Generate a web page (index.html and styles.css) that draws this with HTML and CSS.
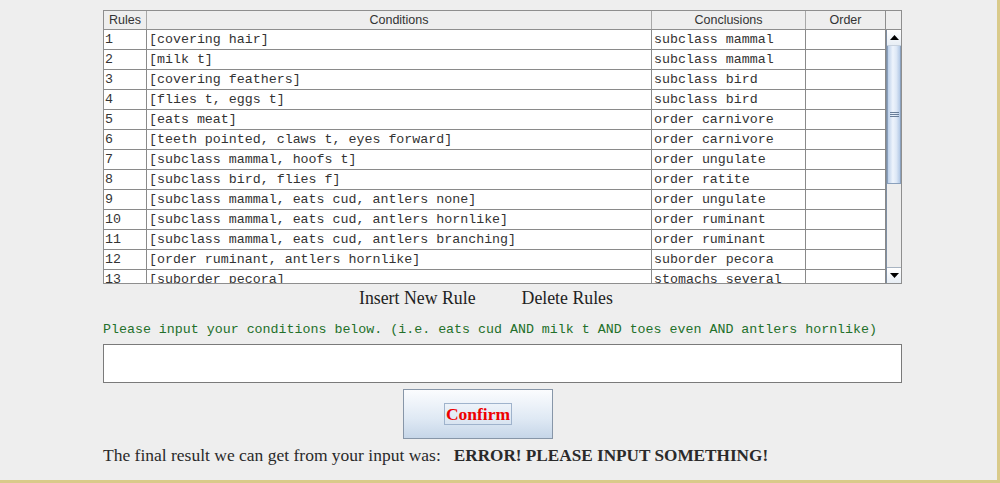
FILE: index.html
```html
<!DOCTYPE html>
<html>
<head>
<meta charset="utf-8">
<link rel="stylesheet" href="styles.css">
</head>
<body>
<div class="frame">
  <div class="content">
    <div class="pane">
      <div class="head">
        <div class="hc c1">Rules</div>
        <div class="hc c2">Conditions</div>
        <div class="hc c3">Conclusions</div>
        <div class="hc c4">Order</div>
        <div class="hc corner"></div>
      </div>
      <div class="body">
        <div class="viewport">
          <div class="row"><div class="cell">1</div><div class="cell">[covering hair]</div><div class="cell">subclass mammal</div><div class="cell"></div></div>
          <div class="row"><div class="cell">2</div><div class="cell">[milk t]</div><div class="cell">subclass mammal</div><div class="cell"></div></div>
          <div class="row"><div class="cell">3</div><div class="cell">[covering feathers]</div><div class="cell">subclass bird</div><div class="cell"></div></div>
          <div class="row"><div class="cell">4</div><div class="cell">[flies t, eggs t]</div><div class="cell">subclass bird</div><div class="cell"></div></div>
          <div class="row"><div class="cell">5</div><div class="cell">[eats meat]</div><div class="cell">order carnivore</div><div class="cell"></div></div>
          <div class="row"><div class="cell">6</div><div class="cell">[teeth pointed, claws t, eyes forward]</div><div class="cell">order carnivore</div><div class="cell"></div></div>
          <div class="row"><div class="cell">7</div><div class="cell">[subclass mammal, hoofs t]</div><div class="cell">order ungulate</div><div class="cell"></div></div>
          <div class="row"><div class="cell">8</div><div class="cell">[subclass bird, flies f]</div><div class="cell">order ratite</div><div class="cell"></div></div>
          <div class="row"><div class="cell">9</div><div class="cell">[subclass mammal, eats cud, antlers none]</div><div class="cell">order ungulate</div><div class="cell"></div></div>
          <div class="row"><div class="cell">10</div><div class="cell">[subclass mammal, eats cud, antlers hornlike]</div><div class="cell">order ruminant</div><div class="cell"></div></div>
          <div class="row"><div class="cell">11</div><div class="cell">[subclass mammal, eats cud, antlers branching]</div><div class="cell">order ruminant</div><div class="cell"></div></div>
          <div class="row"><div class="cell">12</div><div class="cell">[order ruminant, antlers hornlike]</div><div class="cell">suborder pecora</div><div class="cell"></div></div>
          <div class="row"><div class="cell">13</div><div class="cell">[suborder pecora]</div><div class="cell">stomachs several</div><div class="cell"></div></div>
        </div>
        <div class="scrollbar">
          <div class="sbtn"><svg width="9" height="5" viewBox="0 0 9 5"><path d="M0 5 L4.5 0 L9 5 Z" fill="#000"/></svg></div>
          <div class="thumb"><div class="grip"></div></div>
          <div class="track"></div>
          <div class="sbtn down"><svg width="9" height="5" viewBox="0 0 9 5"><path d="M0 0 L4.5 5 L9 0 Z" fill="#000"/></svg></div>
        </div>
      </div>
    </div>
    <div class="actions">
      <button class="flat b1">Insert New Rule</button>
      <button class="flat b2">Delete Rules</button>
    </div>
    <div class="hint">Please input your conditions below. (i.e. eats cud AND milk t AND toes even AND antlers hornlike)</div>
    <div class="input"></div>
    <div class="confirm-row">
      <button class="confirm"><span class="focus">Confirm</span></button>
    </div>
    <div class="result">The final result we can get from your input was:<b class="err">ERROR! PLEASE INPUT SOMETHING!</b></div>
  </div>
</div>
</body>
</html>
```

FILE: styles.css
```css
html, body {
  margin: 0;
  padding: 0;
  background: #eeeeee;
}
.frame {
  width: 997px;
  height: 480px;
  border-right: 3px solid #d9ca8a;
  border-bottom: 3px solid #d9ca8a;
  background: #eeeeee;
  overflow: hidden;
}
.content {
  margin-left: 103px;
  width: 799px;
  padding-top: 10px;
  display: flex;
  flex-direction: column;
}
.pane {
  height: 274px;
  box-sizing: border-box;
  border: 1px solid #8e8e8e;
  display: flex;
  flex-direction: column;
  background: #eeeeee;
}
.head {
  display: flex;
  height: 19px;
  box-sizing: border-box;
  border-bottom: 1px solid #8e8e8e;
  background: #eeeeee;
}
.hc {
  box-sizing: border-box;
  border-right: 1px solid #a8a8a8;
  font-family: "Liberation Sans", Arial, sans-serif;
  font-size: 12.5px;
  line-height: 18px;
  color: #333;
  text-align: center;
}
.c1 { width: 43px; }
.c2 { width: 505px; }
.c3 { width: 154px; }
.c4 { width: 80px; border-right: 1px solid #8e8e8e; }
.corner { flex: 1; border-right: none; }
.body {
  flex: 1;
  display: flex;
  overflow: hidden;
}
.viewport {
  width: 782px;
  overflow: hidden;
  background: #fff;
}
.row {
  display: grid;
  grid-template-columns: 43px 505px 154px 80px;
  height: 20px;
}
.cell {
  box-sizing: border-box;
  border-right: 1px solid #8a8a8a;
  border-bottom: 1px solid #8a8a8a;
  padding-left: 2px;
  font-family: "Liberation Mono", "Courier New", monospace;
  font-size: 13.3px;
  line-height: 19px;
  color: #333;
  white-space: nowrap;
  overflow: hidden;
  background: #fff;
}
.cell:first-child { padding-left: 1px; }
.scrollbar {
  flex: 1;
  display: flex;
  flex-direction: column;
  background: #eeeeee;
  border-left: 1px solid #7f8fa3;
}
.sbtn {
  height: 16px;
  display: flex;
  align-items: center;
  justify-content: center;
  background: linear-gradient(#ffffff, #e8eef5);
  border-bottom: 1px solid #c8d2de;
  box-sizing: border-box;
}
.sbtn.down {
  border-bottom: none;
  border-top: 1px solid #a8b4c2;
}
.thumb {
  height: 138px;
  box-sizing: border-box;
  border: 1px solid #8aa0bc;
  border-top: none;
  background: linear-gradient(90deg, #bcd0ea, #eef4fc 40%, #dde8f6 70%, #b3c9e6);
  display: flex;
  align-items: center;
  justify-content: center;
}
.grip {
  width: 9px;
  height: 5px;
  border-top: 1px solid #6a7f99;
  border-bottom: 1px solid #6a7f99;
  box-sizing: border-box;
  background: linear-gradient(transparent 1px, #6a7f99 1px, #6a7f99 2px, transparent 2px);
}
.track { flex: 1; }
.actions {
  height: 29px;
  display: flex;
  padding-left: 248px;
  gap: 30px;
}
.flat {
  border: none;
  background: transparent;
  padding: 0 8px;
  margin: 0;
  font-family: "Liberation Serif", "Times New Roman", serif;
  font-size: 17.8px;
  color: #222;
  height: 29px;
  line-height: 29px;
}
.hint {
  margin-top: 9px;
  font-family: "Liberation Mono", "Courier New", monospace;
  font-size: 13.3px;
  line-height: 16px;
  color: #23702a;
  white-space: nowrap;
}
.input {
  margin-top: 6px;
  height: 39px;
  box-sizing: border-box;
  border: 1px solid #7a7a7a;
  background: #fff;
}
.confirm-row {
  margin-top: 6px;
  display: flex;
  padding-left: 300px;
}
.confirm {
  width: 150px;
  height: 50px;
  box-sizing: border-box;
  border: 1px solid #8796a8;
  background: linear-gradient(#fbfcfe, #dfe9f4 60%, #c6d6e8);
  display: flex;
  align-items: center;
  justify-content: center;
  padding: 0;
  margin: 0;
}
.focus {
  border: 1px solid #9fb3cc;
  padding: 0 1px;
  font-family: "Liberation Serif", "Times New Roman", serif;
  font-weight: bold;
  font-size: 17.5px;
  line-height: 20px;
  color: #ee0000;
}
.result {
  margin-top: 6px;
  font-family: "Liberation Serif", "Times New Roman", serif;
  font-size: 17.5px;
  line-height: 20px;
  color: #2a2a2a;
  white-space: nowrap;
}
.err {
  margin-left: 13px;
  font-size: 17.2px;
  font-weight: bold;
}
```
